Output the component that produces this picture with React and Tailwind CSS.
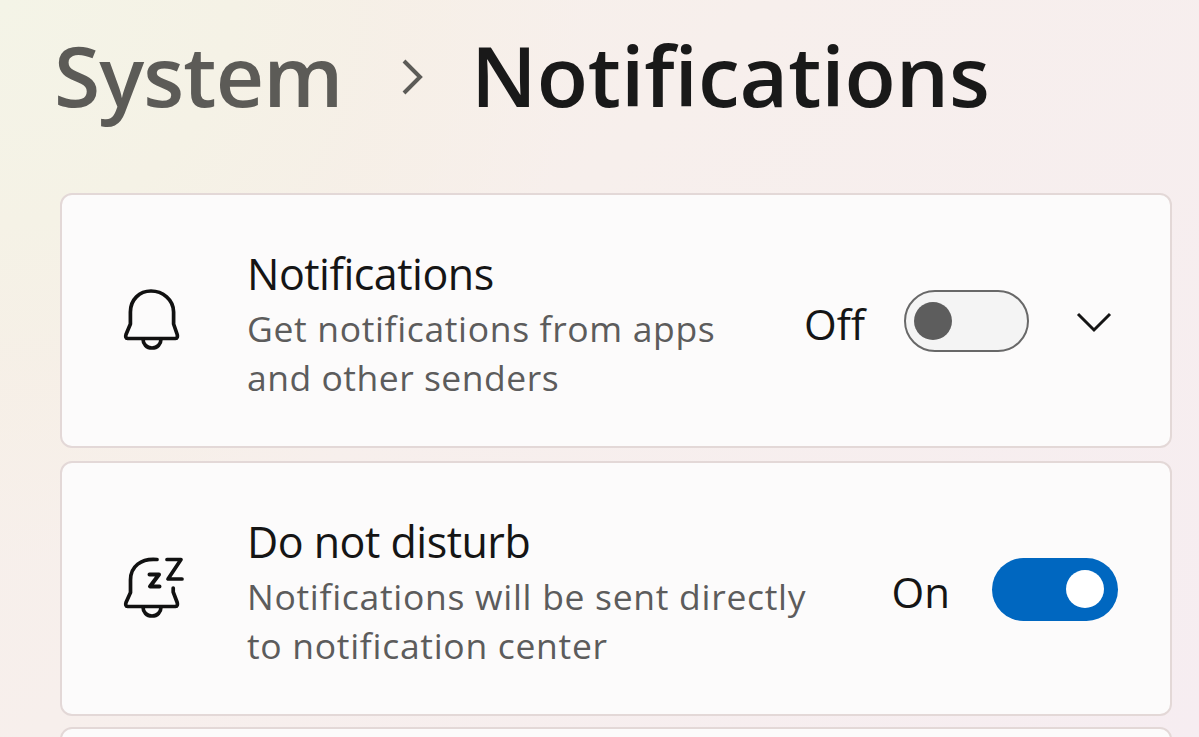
function BellIcon() {
  return (
    <svg viewBox="0 0 70 70" className="-mt-[3px] w-[70px] h-[70px] shrink-0" fill="none" stroke="#111" strokeWidth="3.7" strokeLinejoin="round" strokeLinecap="round">
      <path d="M14.4 39V27C14.4 14.5 23.5 6 35 6S57.600 14.500 57.600 27v12l3.600 10.500c.5 1.800.2 4-1.700 4H11.600c-1.900 0-2.200-2.200-1.600-4L14.400 39Z" />
      <path d="M27 54c0 5 3.500 9 9 9s9-4 9-9" />
    </svg>
  );
}

function SnoozeIcon() {
  return (
    <svg viewBox="0 0 70 70" className="-mt-[3px] w-[70px] h-[70px] shrink-0" fill="none" stroke="#111" strokeWidth="3.7" strokeLinejoin="round" strokeLinecap="round">
      <path d="M41 6.500c-16-1.500-26.500 7-26.500 20.500v12.500L10 49.500c-.6 2-.3 4 1.600 4h47.900c1.900 0 2.200-2 1.700-4l-4-10.500v-4" />
      <path d="M27 54c0 5 3.500 9 9 9s9-4 9-9" />
      <path d="M33.500 21.500h9.500L34 33.500h9.500" strokeWidth="4" />
      <path d="M51 6.500h14L52 26h14" />
    </svg>
  );
}

function Toggle({ on }) {
  if (on) {
    return (
      <div className="flex items-center justify-end w-[126px] h-[63px] pr-[14px] rounded-full bg-[#0067c0]">
        <span className="size-[38px] rounded-full bg-white" />
      </div>
    );
  }
  return (
    <div className="flex items-center w-[125px] h-[62px] pl-2 rounded-full border-2 border-[#686868] bg-[#f4f4f4]">
      <span className="size-[38px] rounded-full bg-[#5d5d5d]" />
    </div>
  );
}

function SettingCard({ icon, title, lines, children }) {
  return (
    <section className="flex items-center h-[255px] shrink-0 rounded-[12px] border-2 border-[#e3d8d7] bg-[#fcfbfb] pt-px pl-[54px] pr-[52px]">
      {icon}
      <div className="ml-[61px] pt-[4px] whitespace-nowrap">
        <h2 className="text-[43px] leading-[57px] tracking-[-0.5px] text-[#151515]">{title}</h2>
        <div className="pt-[2px] text-[35.5px] leading-[49px] text-[#5c5c5c]">
          {lines.map((l) => (
            <p key={l.text} className={l.className}>{l.text}</p>
          ))}
        </div>
      </div>
      <div className="ml-auto flex items-center text-[42px] leading-[58px] text-[#151515]">{children}</div>
    </section>
  );
}

export default function App() {
  return (
    <main className="flex flex-col w-[1199px] h-[737px] overflow-hidden pl-[60px] pr-[27px] bg-[#f6eeed] bg-[radial-gradient(ellipse_580px_560px_at_0%_0%,#f4f4e7_0%,#f5f2e6_40%,#f6efe6bb_70%,transparent_100%),linear-gradient(135deg,#f6f0e9_0%,#f7efec_40%,#f6edf1_100%)] font-['Open_Sans','Noto_Sans',sans-serif]">
      <header className="flex items-center h-[193px] shrink-0 pb-[40px] text-[84px] font-semibold leading-none">
        <span className="-ml-[6px] -mt-[4px] w-[290px] text-[#5c5b57] tracking-[-0.9px]">System</span>
        <svg viewBox="0 0 24 36" className="ml-[58px] w-[24px] h-[36px] shrink-0" fill="none" stroke="#5c5b57" strokeWidth="4">
          <path d="m2 2 16 16L2 34" />
        </svg>
        <h1 className="ml-[45px] -mt-[4px] text-[#191919] tracking-[-0.1px]">Notifications</h1>
      </header>
      <div className="flex flex-col shrink-0">
        <SettingCard
          icon={<BellIcon />}
          title="Notifications"
          lines={[
            { text: 'Get notifications from apps', className: 'tracking-[0.65px]' },
            { text: 'and other senders', className: 'tracking-[0.5px]' },
          ]}
        >
          <span className="pt-[6px]">Off</span>
          <div className="ml-[39px]"><Toggle on={false} /></div>
          <svg viewBox="0 0 36 22" className="ml-[47px] mr-[6px] mt-[2px] w-[36px] h-[22px]" fill="none" stroke="#151515" strokeWidth="3">
            <path d="m2 3 16 16L34 3" />
          </svg>
        </SettingCard>
        <div className="h-[13px]" />
        <SettingCard
          icon={<SnoozeIcon />}
          title="Do not disturb"
          lines={[
            { text: 'Notifications will be sent directly', className: 'tracking-[0.7px]' },
            { text: 'to notification center', className: 'tracking-[0.7px]' },
          ]}
        >
          <span className="pt-[6px]">On</span>
          <div className="ml-[42px]"><Toggle on /></div>
        </SettingCard>
        <section className="mt-[11px] h-[255px] rounded-[12px] border-2 border-[#e3d8d7] bg-[#fcfbfb]" />
      </div>
    </main>
  );
}
